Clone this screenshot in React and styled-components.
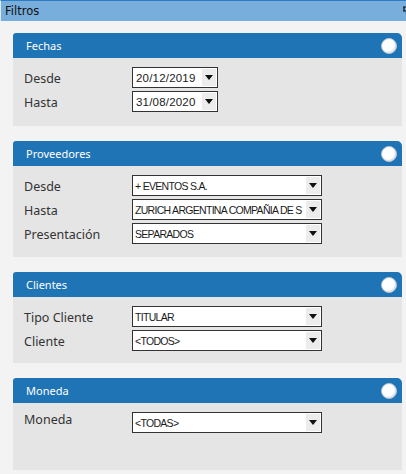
import styled, { createGlobalStyle } from "styled-components";

const GlobalStyle = createGlobalStyle`
  html, body {
    margin: 0;
    padding: 0;
    background: #f3f3f3;
    overflow: hidden;
  }
  body {
    font-family: "Noto Sans", "Liberation Sans", sans-serif;
  }
`;

const Page = styled.div`
  width: 406px;
  height: 474px;
  display: flex;
  flex-direction: column;
  overflow: hidden;
`;

const TitleBar = styled.div`
  height: 20px;
  border-top: 1px solid #2e7cc2;
  border-left: 1px solid #dfe9f3;
  background: #78aedb;
  display: flex;
  align-items: center;
  justify-content: space-between;
  padding-left: 4px;
  font-family: "DejaVu Sans", "Liberation Sans", sans-serif;
  font-size: 11.5px;
  color: #111;
  overflow: hidden;
`;

const PinIcon = styled.svg`
  flex: none;
  margin-right: -6px;
  margin-top: -2px;
`;

const Content = styled.div`
  display: flex;
  flex-direction: column;
  gap: 15px;
  padding: 12px 4px 0 13px;
`;

const Panel = styled.section`
  display: flex;
  flex-direction: column;
`;

const PanelHeader = styled.div`
  height: 25px;
  background: #1f74b6;
  border-radius: 3px 5px 0 0;
  display: flex;
  align-items: center;
  justify-content: space-between;
  padding: 0 5px 0 13px;
  color: #fff;
  font-size: 11px;
`;

const Toggle = styled.span`
  width: 14px;
  height: 14px;
  border-radius: 50%;
  background: #fff;
  border: 1px solid #b7c4d2;
  box-shadow: inset -1px -1px 1px #d8dde3;
`;

const PanelBody = styled.div`
  background: #e5e5e5;
  display: flex;
  flex-direction: column;
  gap: 3px;
  padding: 9px 0 ${(p) => p.$bottom || 14}px 11px;
`;

const Row = styled.div`
  display: flex;
  align-items: center;
  height: 21px;
`;

const Label = styled.div`
  width: 108px;
  font-size: 12.5px;
  color: #333;
  margin-top: ${(p) => (p.$raise ? "-6px" : "2px")};
`;

const Select = styled.div`
  box-sizing: border-box;
  width: ${(p) => p.$width}px;
  height: 21px;
  border: 1px solid #333;
  background: #fff;
  display: flex;
  align-items: stretch;
`;

const Value = styled.div`
  flex: 1;
  min-width: 0;
  overflow: hidden;
  white-space: nowrap;
  display: flex;
  align-items: center;
  padding-left: ${(p) => (p.$date ? 3 : 2)}px;
  font-family: "Liberation Sans", sans-serif;
  font-size: ${(p) => (p.$date ? 11.5 : 10.5)}px;
  letter-spacing: ${(p) => (p.$date ? "0.2px" : "-0.7px")};
  color: #1a1a1a;
`;

const Arrow = styled.div`
  width: 14px;
  margin: 1px;
  background: #ececec;
  display: flex;
  align-items: center;
  justify-content: center;
  &::after {
    content: "";
    border-left: 4px solid transparent;
    border-right: 4px solid transparent;
    border-top: 5px solid #111;
  }
`;

const panels = [
  {
    title: "Fechas",
    rows: [
      { label: "Desde", value: "20/12/2019", date: true },
      { label: "Hasta", value: "31/08/2020", date: true },
    ],
  },
  {
    title: "Proveedores",
    bottom: 13,
    rows: [
      { label: "Desde", value: "+ EVENTOS S.A." },
      { label: "Hasta", value: "ZURICH ARGENTINA COMPAÑIA DE S" },
      { label: "Presentación", value: "SEPARADOS" },
    ],
  },
  {
    title: "Clientes",
    bottom: 12,
    rows: [
      { label: "Tipo Cliente", value: "TITULAR" },
      { label: "Cliente", value: " <TODOS>" },
    ],
  },
  {
    title: "Moneda",
    bottom: 37,
    raise: true,
    rows: [{ label: "Moneda", value: " <TODAS>" }],
  },
];

export default function App() {
  return (
    <Page>
      <GlobalStyle />
      <TitleBar>
        <span>Filtros</span>
        <PinIcon width="10" height="10" viewBox="0 0 10 10">
          <path d="M1 2h7M2 2v4M7 2v4M1 6h7M4.5 6v3" stroke="#111" strokeWidth="1.2" fill="none" />
        </PinIcon>
      </TitleBar>
      <Content>
        {panels.map((panel) => (
          <Panel key={panel.title}>
            <PanelHeader>
              <span>{panel.title}</span>
              <Toggle />
            </PanelHeader>
            <PanelBody $bottom={panel.bottom}>
              {panel.rows.map((row) => (
                <Row key={row.label}>
                  <Label $raise={panel.raise}>{row.label}</Label>
                  <Select $width={row.date ? 86 : 190}>
                    <Value $date={row.date}>{row.value}</Value>
                    <Arrow />
                  </Select>
                </Row>
              ))}
            </PanelBody>
          </Panel>
        ))}
      </Content>
    </Page>
  );
}
